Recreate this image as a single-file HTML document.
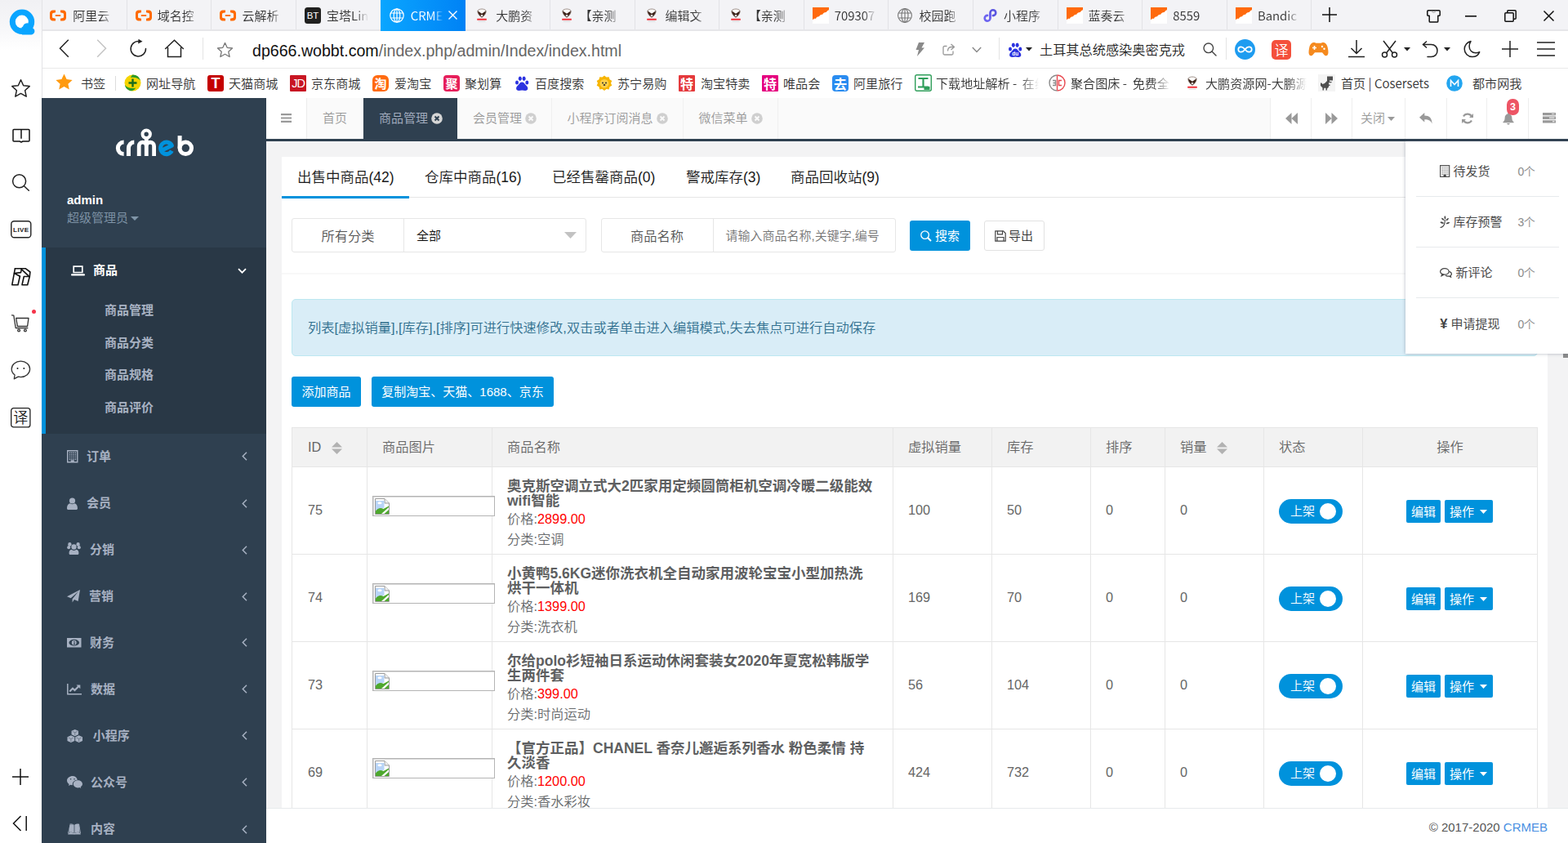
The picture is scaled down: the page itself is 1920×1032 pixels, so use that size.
<!DOCTYPE html>
<html lang="zh-CN">
<head>
<meta charset="utf-8">
<title>CRMEB管理系统</title>
<style>
*{box-sizing:border-box;margin:0;padding:0}
html,body{width:1920px;height:1032px;overflow:hidden;background:#fff}
body{position:relative;font-family:"Liberation Sans","Noto Sans CJK SC",sans-serif;color:#676a6c;font-size:16.25px;font-weight:350}
.abs{position:absolute}
svg{display:block;overflow:visible}
/* ---------- browser chrome ---------- */
#bside{position:absolute;left:0;top:0;width:52px;height:1032px;background:linear-gradient(#f1f1f4 0,#f6f6f8 30px,#fff 62px);border-right:1px solid #e3e3e6}
#bside .ic{position:absolute;left:0;width:51px}
#btabs{position:absolute;left:52px;top:0;width:1868px;height:38px;background:#f3f3f6;border-bottom:2px solid #e6e6e9;font-family:"Noto Sans CJK SC","Liberation Sans",sans-serif}
.btab{position:absolute;top:0;height:36px;width:104px;border-left:1px solid #e2e2e6;overflow:hidden;white-space:nowrap;font-size:15px;color:#333;line-height:37px}
.btab .fav{position:absolute;left:10px;top:9px;width:20px;height:20px}
.btab .tt{position:absolute;left:38px;top:0;width:50px;overflow:hidden;-webkit-mask-image:linear-gradient(90deg,#000 70%,transparent 100%);mask-image:linear-gradient(90deg,#000 70%,transparent 100%)}
.btab.on{background:linear-gradient(90deg,#0aa6ff,#0082f5);color:#fff;height:38px;border-left:none;padding-left:1px;z-index:2}
#baddr{position:absolute;left:52px;top:38px;width:1868px;height:46px;background:#fff;border-bottom:1px solid #e9e9e9;font-family:"Noto Sans CJK SC","Liberation Sans",sans-serif}
#bbook{position:absolute;left:52px;top:84px;width:1868px;height:36px;background:#fff;font-family:"Noto Sans CJK SC","Liberation Sans",sans-serif;font-size:15.1px;color:#333;white-space:nowrap}
#bbook .bk{position:absolute;top:-1px;height:36px;line-height:36px}
#bbook .bi{position:absolute;top:7.500px;width:20px;height:20px;border-radius:3px;color:#fff;font-size:13px;line-height:20px;text-align:center;font-weight:bold;overflow:hidden}
/* ---------- app ---------- */
#app{position:absolute;left:51px;top:120px;width:1869px;height:912px;background:#f3f3f4;overflow:hidden}
#nav{position:absolute;left:0;top:0;width:275px;height:912px;background:#2f4050;color:#a7b1c2}
#nav .item{position:absolute;left:0;width:274px;height:57px;font-weight:bold;font-size:16.25px;line-height:57px;color:#a7b1c2}
#nav .item .txt{position:absolute;top:0}
#nav .item .arr{position:absolute;left:243px;top:22px}
#nav .sub{position:absolute;left:76px;font-weight:bold;font-size:16.25px;color:#a7b1c2;line-height:20px}
#topbar{position:absolute;left:275px;top:0;width:1594px;height:53px;background:#fafafa;border-bottom:3px solid #2f4050}
.ttab{position:absolute;top:0;height:50px;line-height:50px;font-size:15px;color:#999;border-right:1px solid #f0f0f0;white-space:nowrap;text-align:left}
.tbtn{position:absolute;top:0;height:50px;background:#fff;border-left:1px solid #eee}
#card1{position:absolute;left:293px;top:72px;width:1550px;height:143px;background:#fff}
#card2{position:absolute;left:293px;top:216px;width:1550px;height:700px;background:#fff}
.ltab{position:absolute;top:0;height:50px;line-height:50px;font-size:17.5px;color:#1a1a1a;white-space:nowrap}
.lbox{position:absolute;border:1px solid #e6e6e6;border-radius:3px;background:#fff}
.btnp{position:absolute;font-weight:400;background:#0092dc;color:#fff;border-radius:3px;white-space:nowrap;text-align:center}
table.lt{position:absolute;border-collapse:collapse}
.cell{position:absolute;font-size:16.25px;color:#666;white-space:nowrap}
</style>
</head>
<body>
<!-- ===== browser left sidebar ===== -->
<div id="bside">
  <svg class="abs" style="left:0;top:0" width="52" height="52" viewBox="0 0 52 52">
    <circle cx="27" cy="26.800" r="15.200" fill="#0aa5ff"/>
    <path d="M27 34h11.500c2.200 0 3.900 1.800 3.900 4.100s-1.700 4.300-3.900 4.300H27z" fill="#0aa5ff"/>
    <circle cx="26.800" cy="26.600" r="8" fill="#fff"/>
    <circle cx="33.200" cy="33.400" r="5.200" fill="#0aa5ff"/>
    <circle cx="28.600" cy="35" r="2.400" fill="#0aa5ff"/>
  </svg>
  <svg class="abs" style="left:13px;top:96px" width="25" height="25" viewBox="0 0 25 25" fill="none" stroke="#222" stroke-width="1.500" stroke-linejoin="round"><path d="M12.500 1.800l3.200 7 7.500.8-5.600 5.100 1.600 7.500-6.700-3.800-6.700 3.800 1.600-7.500L1.800 9.600l7.500-.8z"/></svg>
  <svg class="abs" style="left:14.500px;top:157.300px" width="22" height="18" viewBox="0 0 22 18" fill="none" stroke="#111" stroke-width="1.500" stroke-linejoin="round"><path d="M11 1.500H2c-.6 0-1 .4-1 1V15c0 .6.400 1 1 1h7l2 1 2-1h7c.6 0 1-.4 1-1V2.500c0-.6-.4-1-1-1z"/><path d="M11 1.500v11.300"/></svg>
  <svg class="abs" style="left:14px;top:212px" width="24" height="24" viewBox="0 0 24 24" fill="none" stroke="#222" stroke-width="1.500" stroke-linecap="round"><circle cx="9.600" cy="9.800" r="8"/><path d="M15.500 15.700l5.800 5.500"/></svg>
  <svg class="abs" style="left:13px;top:270px" width="26" height="22" viewBox="0 0 26 22" fill="none" stroke="#222" stroke-width="1.400"><rect x=".8" y=".8" width="24" height="20" rx="3.500"/><text x="12.800" y="13.900" text-anchor="middle" font-family="Liberation Sans,sans-serif" font-weight="bold" font-size="8" fill="#222" stroke="none" letter-spacing=".4">LIVE</text></svg>
  <svg class="abs" style="left:13.800px;top:327.600px" width="24" height="22" viewBox="0 0 24 22" fill="none" stroke="#111" stroke-width="1.600" stroke-linejoin="round" stroke-linecap="round"><path d="M4.400.8H17.500L22.900 5l-.6 5.500"/><path d="M4.400.8L.8 20.700H8l2.400-10.400"/><path d="M15.300 10.500L13 20.700h6.700L22.300 10.500z"/><path d="M3.500 6.500l6.900 3.800"/><path d="M12.300 1.600l8.500 8"/><path d="M12.300 1.600l-.8 4-7.800.9"/></svg>
  <svg class="abs" style="left:14.300px;top:385px" width="22" height="22" viewBox="0 0 22 22" fill="none" stroke="#333" stroke-width="1.300" stroke-linejoin="round" stroke-linecap="round"><path d="M.5.800l2.300.4L5.200 16.500H19.800"/><path d="M5.700 4.500H21l-1.400 9.800H7.400z"/><circle cx="9.100" cy="19.500" r="1.400"/><circle cx="16.900" cy="19.500" r="1.400"/></svg>
  <div class="abs" style="left:38.500px;top:378.700px;width:5.400px;height:5.400px;border-radius:3px;background:#f5344a"></div>
  <svg class="abs" style="left:13px;top:441px" width="26" height="24" viewBox="0 0 26 24" fill="none" stroke="#333" stroke-width="1.300" stroke-linejoin="round"><path d="M12.400 1.200C6.200 1.200 1.200 5.500 1.200 10.800c0 2.900 1.500 5.500 3.900 7.200L4.300 22.800l5-2.600c1 .2 2 .4 3.100.4 6.200 0 11.200-4.400 11.200-9.800S18.600 1.200 12.400 1.200z"/><circle cx="8.500" cy="9.900" r="1" fill="#222" stroke="none"/><circle cx="16.300" cy="9.900" r="1" fill="#222" stroke="none"/></svg>
  <svg class="abs" style="left:13.300px;top:499.300px" width="25" height="25" viewBox="0 0 25 25" fill="none" stroke="#222" stroke-width="1.300"><rect x=".7" y=".7" width="23.200" height="23.200" rx="3"/><text x="12.300" y="19" text-anchor="middle" font-family="Noto Sans CJK SC,sans-serif" font-size="18" fill="#222" stroke="none">译</text></svg>
  <svg class="abs" style="left:15px;top:941px" width="20" height="20" viewBox="0 0 20 20" fill="none" stroke="#111" stroke-width="1.500"><path d="M10 0v20M0 10h20"/></svg>
  <svg class="abs" style="left:15px;top:998px" width="20" height="20" viewBox="0 0 20 20" fill="none" stroke="#111" stroke-width="1.500"><path d="M10.500 1L1.500 10l9 9M17.200 1v18"/></svg>
</div>
<!-- ===== browser tabs ===== -->
<div id="btabs">
<div class="btab" style="left:-0.8px;width:103.62px;border-left:none;padding-left:1px"><svg class="fav" viewBox="0 0 20 20"><path d="M7 3.500H3.800C1.700 3.500 0 5.200 0 7.300v5.400c0 2.100 1.700 3.800 3.800 3.800H7v-2.700l-3-.7c-.6-.1-1-.7-1-1.300V8.200c0-.6.400-1.200 1-1.300l3-.7zM13 3.500h3.200c2.100 0 3.800 1.700 3.800 3.800v5.400c0 2.100-1.700 3.800-3.800 3.800H13v-2.700l3-.7c.6-.1 1-.7 1-1.300V8.200c0-.6-.4-1.200-1-1.300l-3-.7z" fill="#ff6a00"/><rect x="6.800" y="9.100" width="6.400" height="1.800" fill="#ff6a00"/></svg><span class="tt" style="left:38px;width:50px">阿里云</span></div>
<div class="btab" style="left:102.8px;width:103.62px"><svg class="fav" viewBox="0 0 20 20"><path d="M7 3.500H3.800C1.700 3.500 0 5.200 0 7.300v5.400c0 2.100 1.700 3.800 3.800 3.800H7v-2.700l-3-.7c-.6-.1-1-.7-1-1.300V8.200c0-.6.400-1.200 1-1.300l3-.7zM13 3.500h3.200c2.100 0 3.800 1.700 3.800 3.800v5.400c0 2.100-1.700 3.800-3.800 3.800H13v-2.700l3-.7c.6-.1 1-.7 1-1.300V8.200c0-.6-.4-1.200-1-1.300l-3-.7z" fill="#ff6a00"/><rect x="6.800" y="9.100" width="6.400" height="1.800" fill="#ff6a00"/></svg><span class="tt" style="left:37px;width:51px">域名控</span></div>
<div class="btab" style="left:206.4px;width:103.62px"><svg class="fav" viewBox="0 0 20 20"><path d="M7 3.500H3.800C1.700 3.500 0 5.200 0 7.300v5.400c0 2.100 1.700 3.800 3.800 3.800H7v-2.700l-3-.7c-.6-.1-1-.7-1-1.300V8.200c0-.6.400-1.200 1-1.300l3-.7zM13 3.500h3.200c2.100 0 3.800 1.700 3.800 3.800v5.400c0 2.100-1.700 3.800-3.800 3.800H13v-2.700l3-.7c.6-.1 1-.7 1-1.300V8.200c0-.6-.4-1.200-1-1.300l-3-.7z" fill="#ff6a00"/><rect x="6.800" y="9.100" width="6.400" height="1.800" fill="#ff6a00"/></svg><span class="tt" style="left:37px;width:51px">云解析</span></div>
<div class="btab" style="left:310.1px;width:103.62px"><svg class="fav" viewBox="0 0 20 20"><rect x="0" y="0" width="20" height="20" rx="3.500" fill="#20201f"/><text x="10" y="14.300" text-anchor="middle" font-family="Liberation Sans,sans-serif" font-size="11.500" fill="#fff">BT</text></svg><span class="tt" style="left:37px;width:51px">宝塔Lin</span></div>
<div class="btab on" style="left:413.7px;width:103.92px"><svg class="fav" viewBox="0 0 20 20" fill="none" stroke="#fff" stroke-width="1.200"><circle cx="10" cy="10" r="8.200"/><ellipse cx="10" cy="10" rx="3.800" ry="8.200"/><path d="M2.500 7h15M2.500 13h15M10 1.800v16.400"/></svg><span class="tt" style="left:37px;width:40px">CRME</span><svg class="abs" style="left:83px;top:13px" width="11" height="11" viewBox="0 0 11 11" stroke="#fff" stroke-width="1.400" fill="none"><path d="M.5.500l10 10M10.500.500l-10 10"/></svg></div>
<div class="btab" style="left:517.3px;width:103.62px"><svg class="fav" viewBox="0 0 20 20"><path d="M4.800 4C6.200 2.700 8 2 10 2s3.800.7 5.200 2c.2 3-1.500 6-5.200 8.300C6.300 10 4.600 7 4.800 4z" fill="#fbf9f7" stroke="#8a7a72" stroke-width=".8"/><path d="M4.900 4.300L10 7.800l5.100-3.500c-.3 3.500-2.100 6.100-5.100 8-3-1.900-4.800-4.500-5.100-8z" fill="#3b2219"/><path d="M10 8.800l1.700 1.300L10 11.400 8.300 10.100z" fill="#fff"/><rect x="4.200" y="13.700" width="11.600" height="2.100" rx=".4" fill="#f2303a"/><rect x="5.500" y="16.800" width="9" height=".7" fill="#cfcfcf"/></svg><span class="tt" style="left:37px;width:51px">大鹏资</span></div>
<div class="btab" style="left:620.9px;width:103.62px"><svg class="fav" viewBox="0 0 20 20"><path d="M4.800 4C6.200 2.700 8 2 10 2s3.800.7 5.200 2c.2 3-1.500 6-5.200 8.300C6.300 10 4.600 7 4.800 4z" fill="#fbf9f7" stroke="#8a7a72" stroke-width=".8"/><path d="M4.900 4.300L10 7.800l5.100-3.500c-.3 3.500-2.100 6.100-5.100 8-3-1.900-4.800-4.500-5.100-8z" fill="#3b2219"/><path d="M10 8.800l1.700 1.300L10 11.400 8.300 10.100z" fill="#fff"/><rect x="4.200" y="13.700" width="11.600" height="2.100" rx=".4" fill="#f2303a"/><rect x="5.500" y="16.800" width="9" height=".7" fill="#cfcfcf"/></svg><span class="tt" style="left:35.5px;width:52.5px">【亲测</span></div>
<div class="btab" style="left:724.5px;width:103.62px"><svg class="fav" viewBox="0 0 20 20"><path d="M4.800 4C6.200 2.700 8 2 10 2s3.800.7 5.200 2c.2 3-1.500 6-5.200 8.300C6.300 10 4.600 7 4.800 4z" fill="#fbf9f7" stroke="#8a7a72" stroke-width=".8"/><path d="M4.900 4.300L10 7.800l5.100-3.500c-.3 3.500-2.100 6.100-5.100 8-3-1.900-4.800-4.500-5.100-8z" fill="#3b2219"/><path d="M10 8.800l1.700 1.300L10 11.400 8.300 10.100z" fill="#fff"/><rect x="4.200" y="13.700" width="11.600" height="2.100" rx=".4" fill="#f2303a"/><rect x="5.500" y="16.800" width="9" height=".7" fill="#cfcfcf"/></svg><span class="tt" style="left:37px;width:51px">编辑文</span></div>
<div class="btab" style="left:828.2px;width:103.62px"><svg class="fav" viewBox="0 0 20 20"><path d="M4.800 4C6.200 2.700 8 2 10 2s3.800.7 5.200 2c.2 3-1.500 6-5.200 8.300C6.300 10 4.600 7 4.800 4z" fill="#fbf9f7" stroke="#8a7a72" stroke-width=".8"/><path d="M4.900 4.300L10 7.800l5.100-3.500c-.3 3.500-2.100 6.100-5.100 8-3-1.900-4.800-4.500-5.100-8z" fill="#3b2219"/><path d="M10 8.800l1.700 1.300L10 11.400 8.300 10.100z" fill="#fff"/><rect x="4.200" y="13.700" width="11.600" height="2.100" rx=".4" fill="#f2303a"/><rect x="5.500" y="16.800" width="9" height=".7" fill="#cfcfcf"/></svg><span class="tt" style="left:35.5px;width:52.5px">【亲测</span></div>
<div class="btab" style="left:931.8px;width:103.62px"><svg class="fav" viewBox="0 0 20 20"><rect width="20" height="20" fill="#ff6a0d"/><path d="M0 15.500c1-1.500 2.500-2 4-1.500.5-2 2-3 4-2.800.8-1.800 2.500-2.800 4.200-2.400 1-2 2.500-3 4.500-2.800.8-1.500 2-2.500 3.300-2.800V20H0z" fill="#fff"/></svg><span class="tt" style="left:37px;width:51px">709307</span></div>
<div class="btab" style="left:1035.4px;width:103.62px"><svg class="fav" viewBox="0 0 20 20" fill="none" stroke="#777" stroke-width="1.100"><circle cx="10" cy="10" r="8.400"/><ellipse cx="10" cy="10" rx="4" ry="8.400"/><path d="M2.500 7h15M2.500 13h15M10 1.600v16.800"/></svg><span class="tt" style="left:37px;width:51px">校园跑</span></div>
<div class="btab" style="left:1139.0px;width:103.62px"><svg class="fav" viewBox="0 0 20 20" fill="none" stroke="#5a55e0" stroke-width="2.600" stroke-linecap="round"><path d="M10.500 12.500V6.800c0-2 1.500-3.500 3.400-3.500s3.400 1.500 3.400 3.400-1.500 3.400-3.400 3.400"/><path d="M10.500 8v5.200c0 2-1.500 3.500-3.400 3.500s-3.400-1.500-3.400-3.400 1.500-3.400 3.400-3.400" stroke="#6c63f0"/></svg><span class="tt" style="left:37px;width:51px">小程序</span></div>
<div class="btab" style="left:1242.6px;width:103.62px"><svg class="fav" viewBox="0 0 20 20"><rect width="20" height="20" fill="#ff6a0d"/><path d="M0 15.500c1-1.500 2.500-2 4-1.500.5-2 2-3 4-2.800.8-1.800 2.500-2.800 4.200-2.400 1-2 2.500-3 4.500-2.800.8-1.500 2-2.500 3.300-2.800V20H0z" fill="#fff"/></svg><span class="tt" style="left:37px;width:51px">蓝奏云</span></div>
<div class="btab" style="left:1346.3px;width:103.62px"><svg class="fav" viewBox="0 0 20 20"><rect width="20" height="20" fill="#ff6a0d"/><path d="M0 15.500c1-1.500 2.500-2 4-1.500.5-2 2-3 4-2.800.8-1.800 2.500-2.800 4.200-2.400 1-2 2.500-3 4.500-2.800.8-1.500 2-2.500 3.300-2.800V20H0z" fill="#fff"/></svg><span class="tt" style="left:37px;width:51px">8559</span></div>
<div class="btab" style="left:1449.9px;width:103.62px"><svg class="fav" viewBox="0 0 20 20"><rect width="20" height="20" fill="#ff6a0d"/><path d="M0 15.500c1-1.500 2.500-2 4-1.500.5-2 2-3 4-2.800.8-1.800 2.500-2.800 4.200-2.400 1-2 2.500-3 4.500-2.800.8-1.500 2-2.500 3.300-2.800V20H0z" fill="#fff"/></svg><span class="tt" style="left:37px;width:51px">Bandic</span></div>
<div class="abs" style="left:1552.5px;top:0;width:1px;height:36px;background:#e2e2e6"></div>
<svg class="abs" style="left:1567px;top:9px" width="18" height="18" viewBox="0 0 18 18" stroke="#111" stroke-width="1.500" fill="none"><path d="M9 0v18M0 9h18"/></svg>
<svg class="abs" style="left:1694.500px;top:11.500px" width="17" height="16" viewBox="0 0 17 16" stroke="#111" stroke-width="1.500" fill="none" stroke-linejoin="round"><path d="M2 .8h13c.7 0 1.200.5 1.200 1.200V6.500c0 .4-.3.700-.7.700H13.800V14c0 .6-.5 1.100-1.100 1.100H4.300c-.6 0-1.100-.5-1.100-1.100V7.200H1.500c-.4 0-.7-.3-.7-.7V2c0-.7.500-1.200 1.200-1.200z"/><path d="M6 1c.3 1.500 1.200 2.300 2.500 2.300S10.700 2.500 11 1" stroke="#999" stroke-width="1.100"/></svg>
<svg class="abs" style="left:1742px;top:19px" width="14" height="2" viewBox="0 0 14 2"><rect width="14" height="1.600" fill="#111"/></svg>
<svg class="abs" style="left:1790px;top:12px" width="15" height="15" viewBox="0 0 15 15" stroke="#111" stroke-width="1.500" fill="none"><rect x=".8" y="3.800" width="10.400" height="10.400" rx="1"/><path d="M3.800 3.800V1.800c0-.6.400-1 1-1h8.400c.6 0 1 .4 1 1v8.400c0 .6-.4 1-1 1h-2"/></svg>
<svg class="abs" style="left:1838px;top:13px" width="13" height="13" viewBox="0 0 13 13" stroke="#111" stroke-width="1.500" fill="none"><path d="M.5.500l12 12M12.500.500l-12 12"/></svg>
</div>
<!-- ===== address bar ===== -->
<div id="baddr">
<svg class="abs" style="left:20px;top:10px" width="13" height="23" viewBox="0 0 13 23" fill="none" stroke="#222" stroke-width="1.500"><path d="M11.800 .8L1.500 11.300l10.300 10.500"/></svg>
<svg class="abs" style="left:66px;top:10px" width="13" height="23" viewBox="0 0 13 23" fill="none" stroke="#c4c4c4" stroke-width="1.500"><path d="M1.200 .8l10.300 10.500L1.200 21.800"/></svg>
<svg class="abs" style="left:106px;top:9px" width="23" height="24" viewBox="0 0 23 24" fill="none" stroke="#222" stroke-width="1.500"><path d="M13.500 3.800A9.200 9.200 0 1 0 20.500 12.500" stroke-linecap="round"/><path d="M11.500.8l5 3-5.300 2.600z" fill="#222" stroke="none"/></svg>
<svg class="abs" style="left:149px;top:10px" width="25" height="23" viewBox="0 0 25 23" fill="none" stroke="#222" stroke-width="1.500" stroke-linejoin="miter"><path d="M1.200 12L12.500 1.200 23.800 12"/><path d="M4.500 10v11.500h16V10"/></svg>
<div class="abs" style="left:196px;top:8px;width:1px;height:27px;background:#e4e4e4"></div>
<svg class="abs" style="left:213px;top:13px" width="21" height="20" viewBox="0 0 21 20" fill="none" stroke="#777" stroke-width="1.300" stroke-linejoin="round"><path d="M10.500 1.500l2.700 5.800 6.300.7-4.700 4.300 1.300 6.200-5.600-3.200-5.600 3.200 1.300-6.200L1.500 8l6.300-.7z"/></svg>
<div class="abs" style="left:257px;top:0;height:46px;line-height:46px;font-size:19.6px;white-space:nowrap;color:#111;font-family:Liberation Sans,sans-serif;padding-top:1px"><span>dp666.wobbt.com</span><span style="color:#666">/index.php/admin/Index/index.html</span></div>
<svg class="abs" style="left:1069px;top:14px" width="12" height="17" viewBox="0 0 12 17" fill="none" stroke="#222" stroke-width="1.500"><path d="M4 0h7L7.500 6.500H11L2 17l2-8H.5z" fill="#8a8a8a" stroke="none"/></svg>
<svg class="abs" style="left:1102px;top:15px" width="16" height="15" viewBox="0 0 16 15" fill="none" stroke="#999" stroke-width="1.300" stroke-linejoin="round"><path d="M5.500 3.500h-3c-.8 0-1.500.7-1.500 1.500v7.500c0 .8.700 1.500 1.500 1.500h9c.8 0 1.500-.7 1.500-1.500V9.500"/><path d="M10.500 1l4 3.500-4 3.500M14.500 4.500h-3c-3 0-5 2-5 5"/></svg>
<svg class="abs" style="left:1138px;top:19px" width="12" height="8" viewBox="0 0 12 8" fill="none" stroke="#888" stroke-width="1.400"><path d="M.8 1l5.200 5.500L11.200 1"/></svg>
<div class="abs" style="left:1171px;top:8px;width:1px;height:27px;background:#e4e4e4"></div>
<svg class="abs" style="left:1182px;top:14px" width="18" height="18" viewBox="0 0 18 18" fill="#2b32e0" stroke="none"><ellipse cx="3" cy="8" rx="2" ry="2.600"/><ellipse cx="6.800" cy="3.300" rx="2" ry="2.700"/><ellipse cx="11.600" cy="3.300" rx="2" ry="2.700"/><ellipse cx="15.300" cy="8" rx="2" ry="2.600"/><path d="M9.200 7.500c2 0 3 1.800 4.500 3.500 1.500 1.600 2.600 2.400 2.600 4.200 0 1.700-1.400 2.800-3.200 2.800-1.300 0-2.500-.4-3.900-.4s-2.600.4-3.900.4c-1.800 0-3.200-1.100-3.200-2.800 0-1.800 1.100-2.600 2.600-4.200 1.500-1.700 2.500-3.500 4.500-3.500z"/><text x="9.200" y="16" text-anchor="middle" font-family="Liberation Sans,sans-serif" font-size="6.500" font-weight="bold" fill="#fff">du</text></svg>
<svg class="abs" style="left:1204px;top:20px" width="8" height="5" viewBox="0 0 8 5" fill="#222" stroke="none"><path d="M0 0h8L4 4.500z"/></svg>
<div class="abs" style="left:1221px;top:0;height:46px;line-height:45px;font-size:16.2px;white-space:nowrap;color:#222">土耳其总统感染奥密克戎</div>
<svg class="abs" style="left:1421px;top:14px" width="17" height="17" viewBox="0 0 17 17" fill="none" stroke="#444" stroke-width="1.400" stroke-linecap="round"><circle cx="6.800" cy="6.800" r="5.800"/><path d="M11 11l5 5"/></svg>
<div class="abs" style="left:1449px;top:8px;width:1px;height:27px;background:#e4e4e4"></div>
<svg class="abs" style="left:1460px;top:10px" width="25" height="25" viewBox="0 0 25 25" fill="none" stroke="#222" stroke-width="1.500"><circle cx="12.500" cy="12.500" r="12.500" fill="#1e9cf0" stroke="none"/><path d="M12.500 12.500c-1.500-2-3-3.200-4.700-3.200-2 0-3.500 1.400-3.500 3.200s1.500 3.200 3.500 3.200c1.700 0 3.200-1.200 4.700-3.200zm0 0c1.500 2 3 3.200 4.700 3.200 2 0 3.500-1.400 3.500-3.200s-1.500-3.200-3.500-3.200c-1.700 0-3.200 1.200-4.700 3.200z" stroke="#fff" stroke-width="1.800" fill="none"/></svg>
<div class="abs" style="left:1505px;top:11px;width:24px;height:24px;border-radius:5px;background:#f4503c;color:#fff;font-size:17px;line-height:24px;text-align:center">译</div>
<svg class="abs" style="left:1550px;top:12px" width="25" height="20" viewBox="0 0 25 20" fill="none" stroke="#222" stroke-width="1.500"><path d="M7 2c-3 0-5 2.500-5.800 6.500C.3 13 .2 16 1.500 17.500c1.200 1.300 3 .8 4.200-.6l2.300-2.700h9l2.300 2.700c1.200 1.400 3 1.900 4.200.6 1.300-1.500 1.200-4.500.3-9C23 4.500 21 2 18 2c-1.500 0-2.200.8-3.500.8h-4C9.200 2.800 8.500 2 7 2z" fill="#f58a1f" stroke="none"/><path d="M7.500 6v5M5 8.500h5" stroke="#fff" stroke-width="1.600"/><circle cx="17" cy="7" r="1.200" fill="#fff" stroke="none"/><circle cx="19.500" cy="9.800" r="1.200" fill="#fff" stroke="none"/></svg>
<svg class="abs" style="left:1598px;top:11px" width="22" height="22" viewBox="0 0 22 22" fill="none" stroke="#222" stroke-width="1.500"><path d="M11 0v16M4.500 10l6.500 6.500L17.500 10M1 20.500h20"/></svg>
<svg class="abs" style="left:1639px;top:11px" width="21" height="22" viewBox="0 0 21 22" fill="none" stroke="#222" stroke-width="1.500"><path d="M3 1l11.500 15M18 1L6.500 16"/><circle cx="4.500" cy="18" r="3"/><circle cx="16.500" cy="18" r="3"/></svg>
<svg class="abs" style="left:1667px;top:20px" width="8" height="5" viewBox="0 0 8 5" fill="#222" stroke="none"><path d="M0 0h8L4 4.500z"/></svg>
<svg class="abs" style="left:1688px;top:12px" width="22" height="21" viewBox="0 0 22 21" fill="none" stroke="#222" stroke-width="1.500"><path d="M3 4.500h9.500c4.500 0 7.500 3.200 7.500 7.500s-3 7.500-7.500 7.500H8" stroke-linecap="round"/><path d="M7 .5L2.500 4.500 7 8.500"/></svg>
<svg class="abs" style="left:1716px;top:20px" width="8" height="5" viewBox="0 0 8 5" fill="#222" stroke="none"><path d="M0 0h8L4 4.500z"/></svg>
<svg class="abs" style="left:1740px;top:11px" width="21" height="22" viewBox="0 0 21 22" fill="none" stroke="#222" stroke-width="1.500" stroke-linejoin="round"><path d="M9 1.500C4.500 2.500 1.200 6.400 1.200 11c0 5.300 4.300 9.600 9.600 9.600 4 0 7.500-2.500 8.900-6-1.400.8-3 1.200-4.600 1.200-4.800 0-8-3.500-8-8 0-2.300.7-4.500 1.900-6.300z"/></svg>
<svg class="abs" style="left:1787px;top:12px" width="20" height="20" viewBox="0 0 20 20" fill="none" stroke="#222" stroke-width="1.500"><path d="M10 0v20M0 10h20"/></svg>
<svg class="abs" style="left:1830px;top:13px" width="22" height="18" viewBox="0 0 22 18" fill="none" stroke="#222" stroke-width="1.500"><path d="M0 1h22M0 9h22M0 17h22"/></svg>
</div>
<!-- ===== bookmarks bar ===== -->
<div id="bbook">
<svg class="abs" style="left:16px;top:6.200px" width="21" height="20" viewBox="0 0 21 20"><path d="M10.500 .5l3.100 6.500 7 .9-5.200 4.800 1.400 6.900-6.300-3.500-6.300 3.500 1.400-6.900L.4 7.900l7-.9z" fill="#ff9a10"/></svg><span class="bk" style="left:47px">书签</span>
<div class="abs" style="left:89px;top:9px;width:1px;height:18px;background:#ddd"></div>
<svg class="abs" style="left:100px;top:7px" width="21" height="21" viewBox="0 0 21 21"><circle cx="10.500" cy="10.500" r="10" fill="#f5d400"/><path d="M10.500.5a10 10 0 0 1 9.500 7c-3-3-7-4.500-12-3.500C8.500 2.500 9.500 1 10.500.5z" fill="#2a9a2a"/><path d="M.8 13c3 3.500 8 5 13.500 3.500-1.500 2.500-4 4-6.500 3.700C4.500 19.500 1.500 16.500.8 13z" fill="#2a9a2a"/><path d="M10.500 5.500v10M5.500 10.500h10" stroke="#1c6b1c" stroke-width="2.400"/></svg><span class="bk" style="left:127px">网址导航</span>
<span class="bi" style="left:202px;background:#c40000;font-size:18px;font-family:Liberation Sans,sans-serif">T</span><span class="bk" style="left:228px">天猫商城</span>
<span class="bi" style="left:303px;background:#c81623;font-size:14.5px;font-family:Liberation Sans,sans-serif;font-weight:normal;letter-spacing:-1px;border-radius:1px">JD</span><span class="bk" style="left:329px">京东商城</span>
<span class="bi" style="left:404px;background:#ff6a10;font-size:15px;border-radius:6px 6px 6px 2px">淘</span><span class="bk" style="left:431px">爱淘宝</span>
<span class="bi" style="left:491px;background:#e61e5a;font-size:15px;border-radius:4px">聚</span><span class="bk" style="left:517px">聚划算</span>
<svg class="abs" style="left:578px;top:9px" width="18" height="18" viewBox="0 0 18 18" fill="#2b32e0"><ellipse cx="3" cy="8" rx="2" ry="2.600"/><ellipse cx="6.800" cy="3.300" rx="2" ry="2.700"/><ellipse cx="11.600" cy="3.300" rx="2" ry="2.700"/><ellipse cx="15.300" cy="8" rx="2" ry="2.600"/><path d="M9.200 7.500c2 0 3 1.800 4.500 3.500 1.500 1.600 2.600 2.400 2.600 4.200 0 1.700-1.400 2.800-3.200 2.800-1.300 0-2.500-.4-3.900-.4s-2.600.4-3.900.4c-1.800 0-3.200-1.100-3.200-2.800 0-1.800 1.100-2.600 2.600-4.200 1.500-1.700 2.500-3.500 4.500-3.500z"/></svg><span class="bk" style="left:603px">百度搜索</span>
<svg class="abs" style="left:678px;top:8px" width="20" height="20" viewBox="0 0 20 20"><path d="M10 .5l2.500 2 3.200-.3.800 3.100 2.800 1.600-1.300 2.900 1.300 2.900-2.800 1.600-.8 3.100-3.200-.3-2.500 2-2.500-2-3.200.3-.8-3.100L.7 12.700 2 9.800.7 6.900l2.800-1.600.8-3.100 3.200.3z" fill="#f7b500"/><circle cx="10" cy="10.300" r="5.400" fill="#ffd04a"/><circle cx="8" cy="9.500" r="1" fill="#333"/><circle cx="12" cy="9.500" r="1" fill="#333"/><ellipse cx="10" cy="12" rx="1.300" ry="1" fill="#333"/></svg><span class="bk" style="left:704px">苏宁易购</span>
<span class="bi" style="left:779px;background:#e4393c;font-size:16px;border-radius:1px">特</span><span class="bk" style="left:806px">淘宝特卖</span>
<span class="bi" style="left:881px;background:#e5007f;font-size:16px;border-radius:1px">特</span><span class="bk" style="left:907px">唯品会</span>
<span class="bi" style="left:967px;background:#2a8cf0;font-size:16px;border-radius:4px">去</span><span class="bk" style="left:993px">阿里旅行</span>
<svg class="abs" style="left:1068px;top:7px" width="21" height="21" viewBox="0 0 21 21"><rect x=".7" y=".7" width="19.600" height="19.600" rx="2" fill="#fff" stroke="#2f9e5a" stroke-width="1.400"/><path d="M4.500 5h12M10.500 5v10M4 15.500h13" stroke="#2f9e5a" stroke-width="2.200" fill="none"/><rect x="11.500" y="15" width="7" height="4" fill="#2f9e5a"/></svg><span class="bk" style="left:1094px;width:126px;overflow:hidden;-webkit-mask-image:linear-gradient(90deg,#000 82%,transparent 100%);mask-image:linear-gradient(90deg,#000 82%,transparent 100%)">下载地址解析&nbsp;-&nbsp; 在线</span>
<svg class="abs" style="left:1232px;top:7px" width="21" height="21" viewBox="0 0 21 21" fill="none" stroke-width="1.400"><path d="M10.500 1A9.500 9.500 0 0 0 10.500 20" stroke="#8a8a8a"/><path d="M10.500 1A9.500 9.500 0 0 1 10.500 20" stroke="#e8484f"/><path d="M10.500 1.500v18" stroke="#e8484f"/><path d="M5 7.500h3.500v6H5M8.500 10.500H5.500" stroke="#8a8a8a"/><path d="M16 7.500h-3.500v6H16" stroke="#e8484f"/></svg><span class="bk" style="left:1259px;width:122px;overflow:hidden;-webkit-mask-image:linear-gradient(90deg,#000 82%,transparent 100%);mask-image:linear-gradient(90deg,#000 82%,transparent 100%)">聚合图床&nbsp;-&nbsp; 免费全</span>
<svg class="abs" style="left:1398px;top:8px" width="20" height="20" viewBox="0 0 20 20"><path d="M4.800 4C6.200 2.700 8 2 10 2s3.800.7 5.200 2c.2 3-1.500 6-5.200 8.300C6.300 10 4.600 7 4.800 4z" fill="#fbf9f7" stroke="#8a7a72" stroke-width=".8"/><path d="M4.900 4.300L10 7.800l5.100-3.500c-.3 3.500-2.100 6.100-5.100 8-3-1.900-4.800-4.500-5.100-8z" fill="#3b2219"/><path d="M10 8.800l1.700 1.300L10 11.400 8.300 10.100z" fill="#fff"/><rect x="4.200" y="13.700" width="11.600" height="2.100" rx=".4" fill="#f2303a"/><rect x="5.500" y="16.800" width="9" height=".7" fill="#cfcfcf"/></svg><span class="bk" style="left:1424px;width:124px;overflow:hidden;-webkit-mask-image:linear-gradient(90deg,#000 82%,transparent 100%);mask-image:linear-gradient(90deg,#000 82%,transparent 100%)">大鹏资源网-大鹏源</span>
<svg class="abs" style="left:1562px;top:7px" width="21" height="21" viewBox="0 0 21 21"><rect width="21" height="21" fill="#f4f4f4"/><path d="M11 2.500h7v5h-4v1.500h2.500v1.200h-3.500v2.300h1.500v1.500h-1.500v1.500l-2 2v2h-1.500v-2.500l-1.500-.5-1 1v2H5.500v-3L3 14v-3.500h1.200l1.300 1.500 2.500-1 3-3z" fill="#505050"/></svg><span class="bk" style="left:1590px">首页 | Cosersets</span>
<svg class="abs" style="left:1719px;top:8px" width="20" height="20" viewBox="0 0 20 20"><circle cx="10" cy="10" r="9.800" fill="#22a5f0"/><path d="M5.500 14V6.500l4.500 5 4.500-5V14" fill="none" stroke="#fff" stroke-width="1.600"/></svg><span class="bk" style="left:1751px">都市网我</span>
</div>
<!-- ===== app ===== -->
<div id="app">
<div id="nav">
<div class="abs" style="left:0;top:183px;width:275px;height:228px;background:#293846;border-left:5px solid #0092dc"></div>
<div class="abs" style="left:1px;top:0;width:274px;height:912px">
<svg class="abs" style="left:88px;top:40px" width="100" height="35" viewBox="0 0 100 35" fill="none" stroke="#fff" stroke-width="5">
<path d="M11.600 14.100A7.250 7.250 0 0 0 11.600 28.600"/>
<path d="M17.450 31.100V21.350A6.900 7.250 0 0 1 24.300 14.100"/>
<path d="M30.200 31.100V18.700A4.550 4.600 0 0 1 39.300 18.700V31.100M39.300 18.700A4.650 4.600 0 0 1 48.600 18.700V31.100" stroke-width="4.800"/>
<path d="M39.300 10V18" stroke-width="4.800"/>
<circle cx="39.200" cy="4.200" r="4.700" stroke-width="4"/>
<g transform="rotate(-26 63.850 21.350)"><path d="M57 21.350H71.100A7.250 7.250 0 1 0 68.200 27.150" stroke="#0092dc" stroke-linejoin="round"/></g>
<path d="M80.100 6.100V21.350"/>
<circle cx="87.300" cy="21.350" r="7.250"/>
</svg>
<div class="abs" style="left:30px;top:116px;font-size:15px;font-weight:bold;color:#fff;line-height:18px">admin</div>
<div class="abs" style="left:30px;top:137px;font-size:15px;color:#8095a8;line-height:20px;white-space:nowrap">超级管理员<svg style="display:inline-block;margin-left:3px;vertical-align:2px" width="10" height="5" viewBox="0 0 10 5"><path d="M0 0h10L5 5z" fill="#8095a8"/></svg></div>
<svg class="abs" style="left:35px;top:205px" width="17" height="13" viewBox="0 0 17 13"><path d="M3.200 1.200h10.600v7.300H3.200z" fill="none" stroke="#fff" stroke-width="1.700"/><rect x="0" y="10.300" width="17" height="2.200" rx="1" fill="#fff"/></svg>
<div class="abs" style="left:62px;top:201px;font-size:15px;font-weight:bold;color:#fff;line-height:20px">商品</div>
<svg class="abs" style="left:239px;top:208px" width="11" height="8" viewBox="0 0 11 8" fill="none" stroke="#fff" stroke-width="1.800"><path d="M1 1.200l4.500 4.500L10 1.200"/></svg>
<div class="sub" style="top:249.8px;font-size:15px">商品管理</div>
<div class="sub" style="top:289.6px;font-size:15px">商品分类</div>
<div class="sub" style="top:328.8px;font-size:15px">商品规格</div>
<div class="sub" style="top:368.8px;font-size:15px">商品评价</div>
<svg class="abs" style="left:30px;top:431.0px" width="13.500" height="15.500" viewBox="0 0 13.500 15.500"><path d="M.7.700h12.100v14.100H.7z" fill="none" stroke="#a7b1c2" stroke-width="1.400"/><path d="M2.9 2.6h1.300v1.300h-1.300zM2.9 4.7h1.300v1.300h-1.300zM2.9 6.8h1.300v1.300h-1.300zM2.9 8.9h1.300v1.300h-1.300zM2.9 11.0h1.300v1.300h-1.300zM5.2 2.6h1.300v1.300h-1.300zM5.2 4.7h1.300v1.300h-1.300zM5.2 6.8h1.300v1.300h-1.300zM5.2 8.9h1.300v1.300h-1.300zM5.2 11.0h1.300v1.300h-1.300zM7.5 2.6h1.300v1.300h-1.300zM7.5 4.7h1.300v1.300h-1.300zM7.5 6.8h1.300v1.300h-1.300zM7.5 8.9h1.300v1.300h-1.300zM7.5 11.0h1.300v1.300h-1.300zM9.8 2.6h1.300v1.300h-1.300zM9.8 4.7h1.300v1.300h-1.300zM9.8 6.8h1.300v1.300h-1.300zM9.8 8.9h1.300v1.300h-1.300zM9.8 11.0h1.300v1.300h-1.300z" fill="#a7b1c2"/><path d="M4.700 12.300h4.100v2.500H4.700z" fill="#a7b1c2"/></svg>
<div class="abs" style="left:54.0px;top:428.7px;font-size:15px;font-weight:bold;color:#a7b1c2;line-height:20px;white-space:nowrap">订单</div>
<svg class="abs" style="left:244px;top:433.2px" width="7" height="11" viewBox="0 0 7 11" fill="none" stroke="#a7b1c2" stroke-width="1.500"><path d="M6 .8L1.300 5.500 6 10.200"/></svg>
<svg class="abs" style="left:30px;top:488.5px" width="13" height="15" viewBox="0 0 13 15" fill="#a7b1c2"><circle cx="6.500" cy="4" r="3.600"/><path d="M0 13.500c0-3.500 1.500-6 4-6.200.7.600 1.500.9 2.500.9s1.800-.3 2.500-.9c2.500.2 4 2.700 4 6.200 0 .8-.7 1.500-1.700 1.500H1.700C.7 15 0 14.300 0 13.500z"/></svg>
<div class="abs" style="left:54.0px;top:486.0px;font-size:15px;font-weight:bold;color:#a7b1c2;line-height:20px;white-space:nowrap">会员</div>
<svg class="abs" style="left:244px;top:490.5px" width="7" height="11" viewBox="0 0 7 11" fill="none" stroke="#a7b1c2" stroke-width="1.500"><path d="M6 .8L1.300 5.500 6 10.200"/></svg>
<svg class="abs" style="left:30px;top:545.5px;margin-top:-1.500px" width="17" height="15" viewBox="0 0 18 15" preserveAspectRatio="none" fill="#a7b1c2"><circle cx="9" cy="5.500" r="3.300"/><circle cx="3.600" cy="2.400" r="2.300"/><circle cx="14.400" cy="2.400" r="2.300"/><circle cx="2.300" cy="6.200" r="2.100"/><circle cx="15.700" cy="6.200" r="2.100"/><path d="M2.700 13.500c0-2.700 1-4.500 3-4.700.9.700 2 1.100 3.300 1.100s2.400-.4 3.300-1.100c2 .2 3 2 3 4.700 0 .9-.6 1.500-1.600 1.500H4.300c-1 0-1.600-.6-1.600-1.500z"/></svg>
<div class="abs" style="left:58.0px;top:543.0px;font-size:15px;font-weight:bold;color:#a7b1c2;line-height:20px;white-space:nowrap">分销</div>
<svg class="abs" style="left:244px;top:547.5px" width="7" height="11" viewBox="0 0 7 11" fill="none" stroke="#a7b1c2" stroke-width="1.500"><path d="M6 .8L1.300 5.500 6 10.200"/></svg>
<svg class="abs" style="left:30px;top:602.2px" width="16" height="15.500" viewBox="0 0 17 16" preserveAspectRatio="none" fill="#a7b1c2"><path d="M17 0L14.500 14.500l-5-2L7 16v-4.500L15 2 5 10.500 0 8.500z"/></svg>
<div class="abs" style="left:57.0px;top:600.0px;font-size:15px;font-weight:bold;color:#a7b1c2;line-height:20px;white-space:nowrap">营销</div>
<svg class="abs" style="left:244px;top:604.5px" width="7" height="11" viewBox="0 0 7 11" fill="none" stroke="#a7b1c2" stroke-width="1.500"><path d="M6 .8L1.300 5.500 6 10.200"/></svg>
<svg class="abs" style="left:30px;top:661.1px" width="17.500" height="11.500" viewBox="0 0 17.500 11.500"><rect x="0" y="0" width="17.500" height="11.500" fill="#a7b1c2"/><ellipse cx="8.750" cy="5.750" rx="6.300" ry="3.900" fill="#2f4050"/><circle cx="8.750" cy="5.750" r="2.900" fill="#a7b1c2"/><path d="M8.200 4.500l.9-.5v3.500M7.900 7.500h2" stroke="#2f4050" stroke-width=".9" fill="none"/></svg>
<div class="abs" style="left:58.0px;top:656.9px;font-size:15px;font-weight:bold;color:#a7b1c2;line-height:20px;white-space:nowrap">财务</div>
<svg class="abs" style="left:244px;top:661.4px" width="7" height="11" viewBox="0 0 7 11" fill="none" stroke="#a7b1c2" stroke-width="1.500"><path d="M6 .8L1.300 5.500 6 10.200"/></svg>
<svg class="abs" style="left:30px;top:716.9px" width="18" height="13.500" viewBox="0 0 18 13.500" fill="none" stroke="#a7b1c2"><path d="M.8 0v12.700H18" stroke-width="1.500"/><path d="M3.300 9.500l3.700-3.800 2.500 2.400 4.500-4.600" stroke-width="2.100"/><path d="M11.500 1.500h4.800v4.800z" fill="#a7b1c2" stroke="none"/></svg>
<div class="abs" style="left:59.0px;top:713.6px;font-size:15px;font-weight:bold;color:#a7b1c2;line-height:20px;white-space:nowrap">数据</div>
<svg class="abs" style="left:244px;top:718.1px" width="7" height="11" viewBox="0 0 7 11" fill="none" stroke="#a7b1c2" stroke-width="1.500"><path d="M6 .8L1.300 5.500 6 10.200"/></svg>
<svg class="abs" style="left:30px;top:772.7px" width="19.500" height="16" viewBox="0 0 20 16" preserveAspectRatio="none" fill="#a7b1c2"><path d="M10 0l4.300 1.800v4.500L10 8.200 5.700 6.300V1.800zM5 7.300l4.500 1.900v4.700L5 16 .5 13.900V9.200zM15 7.300l4.500 1.900v4.700L15 16l-4.500-2.100V9.200z"/><path d="M10 3.800l3-1.300M10 3.800L7 2.500M10 3.800V7M5 11.500l3.200-1.400M5 11.500L1.800 10M5 11.500V15M15 11.500l3.200-1.400M15 11.500L11.800 10M15 11.500V15" stroke="#2f4050" stroke-width=".45" fill="none"/></svg>
<div class="abs" style="left:61.8px;top:770.7px;font-size:15px;font-weight:bold;color:#a7b1c2;line-height:20px;white-space:nowrap">小程序</div>
<svg class="abs" style="left:244px;top:775.2px" width="7" height="11" viewBox="0 0 7 11" fill="none" stroke="#a7b1c2" stroke-width="1.500"><path d="M6 .8L1.300 5.500 6 10.200"/></svg>
<svg class="abs" style="left:30px;top:830.2px" width="19" height="15" viewBox="0 0 19 15" fill="#a7b1c2"><path d="M7 0C3.100 0 0 2.500 0 5.600c0 1.800 1 3.300 2.600 4.400L2 12l2.400-1.200c.8.200 1.500.4 2.400.4C6.500 7.500 9 5 12.800 4.800 12.200 2 9.800 0 7 0z"/><path d="M19 9.800c0-2.600-2.600-4.600-5.600-4.600s-5.600 2-5.600 4.600 2.600 4.600 5.600 4.600c.7 0 1.300-.1 1.900-.3l1.900 1-.5-1.700C18.100 12.500 19 11.200 19 9.800z"/><circle cx="4.600" cy="3.800" r=".8" fill="#2f4050"/><circle cx="9" cy="3.800" r=".8" fill="#2f4050"/></svg>
<div class="abs" style="left:59.0px;top:827.7px;font-size:15px;font-weight:bold;color:#a7b1c2;line-height:20px;white-space:nowrap">公众号</div>
<svg class="abs" style="left:244px;top:832.2px" width="7" height="11" viewBox="0 0 7 11" fill="none" stroke="#a7b1c2" stroke-width="1.500"><path d="M6 .8L1.300 5.500 6 10.200"/></svg>
<svg class="abs" style="left:30px;top:888.0px" width="18" height="14" viewBox="0 0 18 14" fill="#a7b1c2"><path d="M3 .8C5 .2 7 .4 8.500 1.500V12C7 11 5 10.800 2.500 11.500L1 13.500h7.500c.3.300.7.300 1 0H17l-1.500-2c-2.500-.7-4.500-.5-6 .5V1.500C11 .4 13 .2 15 .8l2 11.500h-1L14.500 2c-1.500-.3-3 0-4 .8v8c1.200-.6 2.600-.8 4.200-.5L13.500 3M3.500 2L2 12.300H1z"/><path d="M3.300 1.500C5 1 7 1.200 8.300 2.200v9.300c-1.500-.8-3.500-1-5.800-.4z"/><path d="M14.700 1.500C13 1 11 1.200 9.700 2.200v9.300c1.500-.8 3.500-1 5.800-.4z"/></svg>
<div class="abs" style="left:59.0px;top:885.0px;font-size:15px;font-weight:bold;color:#a7b1c2;line-height:20px;white-space:nowrap">内容</div>
<svg class="abs" style="left:244px;top:889.5px" width="7" height="11" viewBox="0 0 7 11" fill="none" stroke="#a7b1c2" stroke-width="1.500"><path d="M6 .8L1.300 5.500 6 10.200"/></svg>
</div></div>
<!-- content -->
<div class="abs" style="left:294px;top:72px;width:1550px;height:143px;background:#fff"></div>
<div class="abs" style="left:294px;top:216px;width:1550px;height:660px;background:#fff"></div>
<div class="abs" style="left:294px;top:214px;width:1550px;height:2px;background:#f8f8f8"></div>
<div class="abs" style="left:294px;top:121px;width:1550px;height:1px;background:#e6e6e6"></div>
<div class="abs" style="left:294px;top:120px;width:156px;height:3px;background:#0092dc"></div>
<div class="ltab" style="left:313px;top:72px">出售中商品(42)</div>
<div class="ltab" style="left:469px;top:72px">仓库中商品(16)</div>
<div class="ltab" style="left:625px;top:72px">已经售罄商品(0)</div>
<div class="ltab" style="left:789px;top:72px">警戒库存(3)</div>
<div class="ltab" style="left:917px;top:72px">商品回收站(9)</div>
<div class="lbox" style="left:306px;top:147px;width:361px;height:42px"><div class="abs" style="left:0;top:0;width:137px;height:40px;border-right:1px solid #e6e6e6;text-align:center;line-height:43px;font-size:16.25px;color:#555">所有分类</div><div class="abs" style="left:152px;top:0;line-height:42px;font-size:15px;color:#111">全部</div><svg class="abs" style="left:333px;top:16px" width="15" height="8" viewBox="0 0 15 8"><path d="M0 0h15L7.500 8z" fill="#c2c2c2"/></svg></div>
<div class="lbox" style="left:684.5px;top:147px;width:361px;height:42px"><div class="abs" style="left:0;top:0;width:137px;height:40px;border-right:1px solid #e6e6e6;text-align:center;line-height:43px;font-size:16.25px;color:#555">商品名称</div><div class="abs" style="left:152px;top:0;line-height:42.500px;font-size:15px;color:#757575;white-space:nowrap">请输入商品名称,关键字,编号</div></div>
<div class="btnp" style="left:1063px;top:150px;width:74px;height:37px;line-height:37px;font-size:15px"><svg class="abs" style="left:13px;top:12px" width="14" height="14" viewBox="0 0 14 14" fill="none" stroke="#fff" stroke-width="1.300"><circle cx="5.600" cy="5.600" r="4.800"/><path d="M9 9l4 4" stroke-width="2"/></svg><span class="abs" style="left:31px;top:0">搜索</span></div>
<div class="abs" style="left:1154px;top:150px;width:74px;height:37px;line-height:35px;font-size:15px;border:1px solid #e2e2e2;border-radius:3px;background:#fff;color:#333"><svg class="abs" style="left:12px;top:11px" width="14" height="14" viewBox="0 0 14 14" fill="none" stroke="#444" stroke-width="1.200"><path d="M.8.800h9.700l2.700 2.700v9.700H.8z"/><path d="M3.500.800v4h6v-4M3 13V8.500h8V13"/></svg><span class="abs" style="left:29px;top:0">导出</span></div>
<div class="abs" style="left:306px;top:246px;width:1526px;height:70px;background:#d9edf7;border:1px solid #bce8f1;border-radius:5px;color:#31708f;font-size:16.25px;line-height:68px;padding-left:19px;white-space:nowrap">列表[虚拟销量],[库存],[排序]可进行快速修改,双击或者单击进入编辑模式,失去焦点可进行自动保存</div>
<div class="btnp" style="left:306px;top:341px;width:85px;height:37px;line-height:37px;font-size:15px">添加商品</div>
<div class="btnp" style="left:404px;top:341px;width:223px;height:37px;line-height:37px;font-size:15px">复制淘宝、天猫、1688、京东</div>
<div class="abs" style="left:306px;top:403px;width:1525px;height:48px;background:#f2f2f2"></div>
<div class="abs" style="left:306px;top:403px;width:1526px;height:1px;background:#e6e6e6"></div>
<div class="abs" style="left:306px;top:451px;width:1526px;height:1px;background:#e6e6e6"></div>
<div class="abs" style="left:306px;top:558px;width:1526px;height:1px;background:#e6e6e6"></div>
<div class="abs" style="left:306px;top:665px;width:1526px;height:1px;background:#e6e6e6"></div>
<div class="abs" style="left:306px;top:772px;width:1526px;height:1px;background:#e6e6e6"></div>
<div class="abs" style="left:306px;top:879px;width:1526px;height:1px;background:#e6e6e6"></div>
<div class="abs" style="left:306px;top:403px;width:1px;height:478px;background:#e6e6e6"></div>
<div class="abs" style="left:398px;top:403px;width:1px;height:478px;background:#e6e6e6"></div>
<div class="abs" style="left:551px;top:403px;width:1px;height:478px;background:#e6e6e6"></div>
<div class="abs" style="left:1042px;top:403px;width:1px;height:478px;background:#e6e6e6"></div>
<div class="abs" style="left:1163px;top:403px;width:1px;height:478px;background:#e6e6e6"></div>
<div class="abs" style="left:1284px;top:403px;width:1px;height:478px;background:#e6e6e6"></div>
<div class="abs" style="left:1375px;top:403px;width:1px;height:478px;background:#e6e6e6"></div>
<div class="abs" style="left:1496px;top:403px;width:1px;height:478px;background:#e6e6e6"></div>
<div class="abs" style="left:1617px;top:403px;width:1px;height:478px;background:#e6e6e6"></div>
<div class="abs" style="left:1831px;top:403px;width:1px;height:478px;background:#e6e6e6"></div>
<div class="cell" style="left:326px;top:403px;line-height:49.500px">ID</div>
<div class="cell" style="left:417px;top:403px;line-height:49.500px">商品图片</div>
<div class="cell" style="left:570px;top:403px;line-height:49.500px">商品名称</div>
<div class="cell" style="left:1061px;top:403px;line-height:49.500px">虚拟销量</div>
<div class="cell" style="left:1182px;top:403px;line-height:49.500px">库存</div>
<div class="cell" style="left:1303px;top:403px;line-height:49.500px">排序</div>
<div class="cell" style="left:1394px;top:403px;line-height:49.500px">销量</div>
<div class="cell" style="left:1515px;top:403px;line-height:49.500px">状态</div>
<div class="cell" style="left:1617px;top:403px;width:215px;text-align:center;line-height:49.500px">操作</div>
<svg class="abs" style="left:355px;top:421px" width="13" height="15" viewBox="0 0 13 15"><path d="M6.500 0L13 6.500H0z" fill="#b2b2b2"/><path d="M0 8.500h13L6.500 15z" fill="#b2b2b2"/></svg>
<svg class="abs" style="left:1439px;top:421px" width="13" height="15" viewBox="0 0 13 15"><path d="M6.500 0L13 6.500H0z" fill="#b2b2b2"/><path d="M0 8.500h13L6.500 15z" fill="#b2b2b2"/></svg>
<div class="cell" style="left:326px;top:491.7px;line-height:24px">75</div>
<div class="abs" style="left:405px;top:487px;width:150px;height:25px;border:1px solid #b4b4b4;background:#fff;box-shadow:inset 1px 1px 0 #d8d8d8"><svg class="abs" style="left:1px;top:1.500px" width="20" height="20" viewBox="0 0 20 20"><path d="M1.500.500h11.500l5.500 5.500v13.500h-17z" fill="#fff" stroke="#9a9a9a" stroke-width="1"/><path d="M13 .5V6h5.500" fill="#eee" stroke="#9a9a9a" stroke-width="1"/><path d="M2 3h10.500v8.500L2 15z" fill="#b8d4f7"/><ellipse cx="7" cy="5.800" rx="2.600" ry="1.500" fill="#fff"/><path d="M2 19v-3.500c2.500-3.500 6-4.500 9.500-2.500L18 9.500V19z" fill="#4ea82e"/><path d="M9 19l9-8v3l-5.500 5z" fill="#fff"/></svg></div>
<div class="abs" style="left:570px;top:465.5px;width:470px;font-size:17.5px;font-weight:bold;color:#5e5f61;line-height:18.5px;white-space:nowrap">奥克斯空调立式大2匹家用定频圆筒柜机空调冷暖二级能效<br>wifi智能</div>
<div class="abs" style="left:570px;top:503px;font-size:16.25px;color:#676a6c;line-height:24px;white-space:nowrap">价格:<span style="color:#f00">2899.00</span></div>
<div class="abs" style="left:570px;top:528px;font-size:16.25px;color:#676a6c;line-height:24px;white-space:nowrap">分类:空调</div>
<div class="cell" style="left:1061px;top:491.7px;line-height:24px">100</div>
<div class="cell" style="left:1182px;top:491.7px;line-height:24px">50</div>
<div class="cell" style="left:1303px;top:491.7px;line-height:24px">0</div>
<div class="cell" style="left:1394px;top:491.7px;line-height:24px">0</div>
<div class="abs" style="left:1515px;top:491px;width:78px;height:30px;border-radius:15px;background:#0092dc;color:#fff;font-size:15px;line-height:30px"><span class="abs" style="left:14px;top:-0.500px">上架</span><span class="abs" style="left:50px;top:5px;width:20px;height:20px;border-radius:10px;background:#fff"></span></div>
<div class="btnp" style="left:1671px;top:492px;width:42px;height:28px;line-height:30px;font-size:15px;border-radius:2px">编辑</div>
<div class="btnp" style="left:1718px;top:492px;width:59px;height:28px;line-height:30px;font-size:15px;border-radius:2px;text-align:left;padding-left:6px">操作<svg class="abs" style="left:43px;top:12px" width="9" height="5" viewBox="0 0 9 5"><path d="M0 0h9L4.500 5z" fill="#fff"/></svg></div>
<div class="cell" style="left:326px;top:598.7px;line-height:24px">74</div>
<div class="abs" style="left:405px;top:594px;width:150px;height:25px;border:1px solid #b4b4b4;background:#fff;box-shadow:inset 1px 1px 0 #d8d8d8"><svg class="abs" style="left:1px;top:1.500px" width="20" height="20" viewBox="0 0 20 20"><path d="M1.500.500h11.500l5.500 5.500v13.500h-17z" fill="#fff" stroke="#9a9a9a" stroke-width="1"/><path d="M13 .5V6h5.500" fill="#eee" stroke="#9a9a9a" stroke-width="1"/><path d="M2 3h10.500v8.500L2 15z" fill="#b8d4f7"/><ellipse cx="7" cy="5.800" rx="2.600" ry="1.500" fill="#fff"/><path d="M2 19v-3.500c2.500-3.500 6-4.500 9.500-2.500L18 9.500V19z" fill="#4ea82e"/><path d="M9 19l9-8v3l-5.500 5z" fill="#fff"/></svg></div>
<div class="abs" style="left:570px;top:572.5px;width:470px;font-size:17.5px;font-weight:bold;color:#5e5f61;line-height:18.5px;white-space:nowrap">小黄鸭5.6KG迷你洗衣机全自动家用波轮宝宝小型加热洗<br>烘干一体机</div>
<div class="abs" style="left:570px;top:610px;font-size:16.25px;color:#676a6c;line-height:24px;white-space:nowrap">价格:<span style="color:#f00">1399.00</span></div>
<div class="abs" style="left:570px;top:635px;font-size:16.25px;color:#676a6c;line-height:24px;white-space:nowrap">分类:洗衣机</div>
<div class="cell" style="left:1061px;top:598.7px;line-height:24px">169</div>
<div class="cell" style="left:1182px;top:598.7px;line-height:24px">70</div>
<div class="cell" style="left:1303px;top:598.7px;line-height:24px">0</div>
<div class="cell" style="left:1394px;top:598.7px;line-height:24px">0</div>
<div class="abs" style="left:1515px;top:598px;width:78px;height:30px;border-radius:15px;background:#0092dc;color:#fff;font-size:15px;line-height:30px"><span class="abs" style="left:14px;top:-0.500px">上架</span><span class="abs" style="left:50px;top:5px;width:20px;height:20px;border-radius:10px;background:#fff"></span></div>
<div class="btnp" style="left:1671px;top:599px;width:42px;height:28px;line-height:30px;font-size:15px;border-radius:2px">编辑</div>
<div class="btnp" style="left:1718px;top:599px;width:59px;height:28px;line-height:30px;font-size:15px;border-radius:2px;text-align:left;padding-left:6px">操作<svg class="abs" style="left:43px;top:12px" width="9" height="5" viewBox="0 0 9 5"><path d="M0 0h9L4.500 5z" fill="#fff"/></svg></div>
<div class="cell" style="left:326px;top:705.7px;line-height:24px">73</div>
<div class="abs" style="left:405px;top:701px;width:150px;height:25px;border:1px solid #b4b4b4;background:#fff;box-shadow:inset 1px 1px 0 #d8d8d8"><svg class="abs" style="left:1px;top:1.500px" width="20" height="20" viewBox="0 0 20 20"><path d="M1.500.500h11.500l5.500 5.500v13.500h-17z" fill="#fff" stroke="#9a9a9a" stroke-width="1"/><path d="M13 .5V6h5.500" fill="#eee" stroke="#9a9a9a" stroke-width="1"/><path d="M2 3h10.500v8.500L2 15z" fill="#b8d4f7"/><ellipse cx="7" cy="5.800" rx="2.600" ry="1.500" fill="#fff"/><path d="M2 19v-3.500c2.500-3.500 6-4.500 9.500-2.500L18 9.500V19z" fill="#4ea82e"/><path d="M9 19l9-8v3l-5.500 5z" fill="#fff"/></svg></div>
<div class="abs" style="left:570px;top:679.5px;width:470px;font-size:17.5px;font-weight:bold;color:#5e5f61;line-height:18.5px;white-space:nowrap">尔给polo衫短袖日系运动休闲套装女2020年夏宽松韩版学<br>生两件套</div>
<div class="abs" style="left:570px;top:717px;font-size:16.25px;color:#676a6c;line-height:24px;white-space:nowrap">价格:<span style="color:#f00">399.00</span></div>
<div class="abs" style="left:570px;top:742px;font-size:16.25px;color:#676a6c;line-height:24px;white-space:nowrap">分类:时尚运动</div>
<div class="cell" style="left:1061px;top:705.7px;line-height:24px">56</div>
<div class="cell" style="left:1182px;top:705.7px;line-height:24px">104</div>
<div class="cell" style="left:1303px;top:705.7px;line-height:24px">0</div>
<div class="cell" style="left:1394px;top:705.7px;line-height:24px">0</div>
<div class="abs" style="left:1515px;top:705px;width:78px;height:30px;border-radius:15px;background:#0092dc;color:#fff;font-size:15px;line-height:30px"><span class="abs" style="left:14px;top:-0.500px">上架</span><span class="abs" style="left:50px;top:5px;width:20px;height:20px;border-radius:10px;background:#fff"></span></div>
<div class="btnp" style="left:1671px;top:706px;width:42px;height:28px;line-height:30px;font-size:15px;border-radius:2px">编辑</div>
<div class="btnp" style="left:1718px;top:706px;width:59px;height:28px;line-height:30px;font-size:15px;border-radius:2px;text-align:left;padding-left:6px">操作<svg class="abs" style="left:43px;top:12px" width="9" height="5" viewBox="0 0 9 5"><path d="M0 0h9L4.500 5z" fill="#fff"/></svg></div>
<div class="cell" style="left:326px;top:812.7px;line-height:24px">69</div>
<div class="abs" style="left:405px;top:808px;width:150px;height:25px;border:1px solid #b4b4b4;background:#fff;box-shadow:inset 1px 1px 0 #d8d8d8"><svg class="abs" style="left:1px;top:1.500px" width="20" height="20" viewBox="0 0 20 20"><path d="M1.500.500h11.500l5.500 5.500v13.500h-17z" fill="#fff" stroke="#9a9a9a" stroke-width="1"/><path d="M13 .5V6h5.500" fill="#eee" stroke="#9a9a9a" stroke-width="1"/><path d="M2 3h10.500v8.500L2 15z" fill="#b8d4f7"/><ellipse cx="7" cy="5.800" rx="2.600" ry="1.500" fill="#fff"/><path d="M2 19v-3.500c2.500-3.500 6-4.500 9.500-2.500L18 9.500V19z" fill="#4ea82e"/><path d="M9 19l9-8v3l-5.500 5z" fill="#fff"/></svg></div>
<div class="abs" style="left:570px;top:786.5px;width:470px;font-size:17.5px;font-weight:bold;color:#5e5f61;line-height:18.5px;white-space:nowrap">【官方正品】CHANEL 香奈儿邂逅系列香水 粉色柔情 持<br>久淡香</div>
<div class="abs" style="left:570px;top:824px;font-size:16.25px;color:#676a6c;line-height:24px;white-space:nowrap">价格:<span style="color:#f00">1200.00</span></div>
<div class="abs" style="left:570px;top:849px;font-size:16.25px;color:#676a6c;line-height:24px;white-space:nowrap">分类:香水彩妆</div>
<div class="cell" style="left:1061px;top:812.7px;line-height:24px">424</div>
<div class="cell" style="left:1182px;top:812.7px;line-height:24px">732</div>
<div class="cell" style="left:1303px;top:812.7px;line-height:24px">0</div>
<div class="cell" style="left:1394px;top:812.7px;line-height:24px">0</div>
<div class="abs" style="left:1515px;top:812px;width:78px;height:30px;border-radius:15px;background:#0092dc;color:#fff;font-size:15px;line-height:30px"><span class="abs" style="left:14px;top:-0.500px">上架</span><span class="abs" style="left:50px;top:5px;width:20px;height:20px;border-radius:10px;background:#fff"></span></div>
<div class="btnp" style="left:1671px;top:813px;width:42px;height:28px;line-height:30px;font-size:15px;border-radius:2px">编辑</div>
<div class="btnp" style="left:1718px;top:813px;width:59px;height:28px;line-height:30px;font-size:15px;border-radius:2px;text-align:left;padding-left:6px">操作<svg class="abs" style="left:43px;top:12px" width="9" height="5" viewBox="0 0 9 5"><path d="M0 0h9L4.500 5z" fill="#fff"/></svg></div>
<div class="abs" style="left:1844px;top:52px;width:25px;height:818px;background:#f3f3f4"></div>
<div class="abs" style="left:1863px;top:60px;width:6px;height:258px;background:#8c8c8c"></div>
<div class="abs" style="left:275px;top:869px;width:1594px;height:43px;background:#fff;border-top:1px solid #e7eaec;font-size:15px;color:#555;line-height:45px;text-align:right;padding-right:25px">© 2017-2020 <span style="color:#4a90e2">CRMEB</span></div>
<!-- top tab bar -->
<div id="topbar">
<div class="abs" style="left:0;top:0;width:50px;height:50px;background:#fff;border-right:1px solid #ececec"><svg class="abs" style="left:18px;top:19px" width="13" height="11" viewBox="0 0 13 11"><path d="M0 0h13v2.200H0zM0 4.400h13v2.200H0zM0 8.800h13V11H0z" fill="#999"/></svg></div>
<div class="ttab" style="left:50px;width:69px;padding-left:19px;">首页</div>
<div class="ttab" style="left:119px;width:115px;padding-left:19px;background:#2f4050;color:#a7b1c2;border-right:none;height:51px;">商品管理<svg style="display:inline-block;vertical-align:-1.500px;margin-left:4px" width="14" height="14" viewBox="0 0 14 14"><circle cx="7" cy="7" r="6.800" fill="#d6d6d6"/><path d="M4.500 4.500l5 5M9.500 4.500l-5 5" stroke="#2f4050" stroke-width="1.900"/></svg></div>
<div class="ttab" style="left:234px;width:115.5px;padding-left:19px;">会员管理<svg style="display:inline-block;vertical-align:-1.500px;margin-left:4px" width="14" height="14" viewBox="0 0 14 14"><circle cx="7" cy="7" r="6.800" fill="#cfcfcf"/><path d="M4.500 4.500l5 5M9.500 4.500l-5 5" stroke="#fafafa" stroke-width="1.900"/></svg></div>
<div class="ttab" style="left:349.5px;width:161.0px;padding-left:19px;">小程序订阅消息<svg style="display:inline-block;vertical-align:-1.500px;margin-left:4px" width="14" height="14" viewBox="0 0 14 14"><circle cx="7" cy="7" r="6.800" fill="#cfcfcf"/><path d="M4.500 4.500l5 5M9.500 4.500l-5 5" stroke="#fafafa" stroke-width="1.900"/></svg></div>
<div class="ttab" style="left:510.5px;width:116.5px;padding-left:19px;">微信菜单<svg style="display:inline-block;vertical-align:-1.500px;margin-left:4px" width="14" height="14" viewBox="0 0 14 14"><circle cx="7" cy="7" r="6.800" fill="#cfcfcf"/><path d="M4.500 4.500l5 5M9.500 4.500l-5 5" stroke="#fafafa" stroke-width="1.900"/></svg></div>
<div class="tbtn" style="left:1229px;width:50px"><svg class="abs" style="left:18px;top:18px" width="15" height="14" viewBox="0 0 15 14" fill="#999"><path d="M7.500 0v14L0 7zM15 0v14L7.500 7z"/></svg></div>
<div class="tbtn" style="left:1279px;width:50px"><svg class="abs" style="left:17px;top:18px" width="15" height="14" viewBox="0 0 15 14" fill="#999"><path d="M0 0l7.500 7L0 14zM7.500 0L15 7l-7.500 7z"/></svg></div>
<div class="tbtn" style="left:1329px;width:65px"><span class="abs" style="left:10px;top:0;font-size:15px;color:#999;line-height:50px;white-space:nowrap">关闭<svg style="display:inline-block;vertical-align:2px;margin-left:3px" width="9" height="5" viewBox="0 0 9 5"><path d="M0 0h9L4.500 5z" fill="#999"/></svg></span></div>
<div class="tbtn" style="left:1394px;width:51px"><svg class="abs" style="left:17px;top:18px" width="15.500" height="13.500" viewBox="0 0 16 14" preserveAspectRatio="none" fill="#999"><path d="M6.500 0v3.500c6 0 9.500 3 9.500 10.500-1.500-4-4-5.500-9.500-5.500V12L0 6z"/></svg></div>
<div class="tbtn" style="left:1445px;width:49px"><svg class="abs" style="left:18px;top:18px" width="14" height="14" viewBox="0 0 14 14" fill="none" stroke="#999" stroke-width="2.200"><path d="M12.500 5.500A5.800 5.800 0 0 0 2 4.500"/><path d="M1.500 8.500A5.800 5.800 0 0 0 12 9.500"/><path d="M14 1v5H9zM0 13V8h5z" fill="#999" stroke="none"/></svg></div>
<div class="tbtn" style="left:1494px;width:51px"><svg class="abs" style="left:18.500px;top:18px" width="14" height="14.500" viewBox="0 0 16 16" preserveAspectRatio="none" fill="#999"><path d="M8 0c.6 0 1 .4 1 1v.6c2.500.5 4 2.600 4 5.400 0 3 1 4.500 2.500 5.500v1H.5v-1C2 11.500 3 10 3 7c0-2.800 1.500-4.900 4-5.400V1c0-.6.400-1 1-1zM6 14.300h4c0 1-.9 1.700-2 1.700s-2-.7-2-1.700z"/></svg><span class="abs" style="left:24.300px;top:.5px;width:14.500px;height:20px;border-radius:7px;background:#ed5565;color:#fff;font-size:12.5px;font-weight:bold;line-height:20px;text-align:center">3</span></div>
<div class="tbtn" style="left:1545px;width:49px"><svg class="abs" style="left:17px;top:18px" width="16" height="12.500" viewBox="0 0 16 13" preserveAspectRatio="none" fill="#999"><path d="M0 0h16v3.500H0zM0 4.700h16v3.500H0zM0 9.500h16V13H0z"/><path d="M11 1.200h3.500v1H11zM8 5.900h6.500v1H8zM12 10.700h2.500v1H12z" fill="#fff"/></svg></div>
</div>
<!-- dropdown -->
<div class="abs" style="left:1670px;top:53px;width:199px;height:260px;background:#fff;box-shadow:0 0 4px rgba(86,96,117,.45);font-size:15px;color:#444"></div>
<svg class="abs" style="left:1712.2px;top:81.8px" width="12.300" height="15" viewBox="0 0 12.300 15"><path d="M.6.600h11.100v13.800H.6z" fill="none" stroke="#555" stroke-width="1.200"/><path d="M2.6 2.4h1.100v1.100h-1.100zM2.6 4.5h1.100v1.100h-1.100zM2.6 6.6h1.100v1.100h-1.100zM2.6 8.7h1.100v1.100h-1.100zM2.6 10.8h1.100v1.100h-1.100zM4.8 2.4h1.100v1.100h-1.100zM4.8 4.5h1.100v1.100h-1.100zM4.8 6.6h1.100v1.100h-1.100zM4.8 8.7h1.100v1.100h-1.100zM4.8 10.8h1.100v1.100h-1.100zM7.0 2.4h1.100v1.100h-1.100zM7.0 4.5h1.100v1.100h-1.100zM7.0 6.6h1.100v1.100h-1.100zM7.0 8.7h1.100v1.100h-1.100zM7.0 10.8h1.100v1.100h-1.100zM9.2 2.4h1.100v1.100h-1.100zM9.2 4.5h1.100v1.100h-1.100zM9.2 6.6h1.100v1.100h-1.100zM9.2 8.7h1.100v1.100h-1.100zM9.2 10.8h1.100v1.100h-1.100z" fill="#666"/><path d="M4.600 11.800h3.100v2.600H4.600z" fill="#444"/></svg>
<div class="abs" style="left:1728.5px;top:80.1px;font-size:15px;font-weight:400;color:#4a4a4a;line-height:20px;white-space:nowrap">待发货</div>
<div class="abs" style="left:1807.5px;top:80.1px;font-size:14px;color:#8a8a8a;line-height:20px;white-space:nowrap;letter-spacing:-0.5px">0个</div>
<svg class="abs" style="left:1712.2px;top:143.9px" width="12.500" height="15" viewBox="0 0 12.500 15"><path d="M.5 14.500c2.500-.3 4.300-1.800 5.200-4.500.5-1.600.6-3.300.5-5" fill="none" stroke="#444" stroke-width="1.100"/><path d="M6.200 0c1.300 1.300 1.500 3 .6 4.800-1.500-1.100-1.800-3-.6-4.800zM2 2.800c1.800.1 3 1.100 3.600 2.900-1.900.3-3.200-.9-3.600-2.900zM11 3c-.3 1.900-1.500 3-3.500 3.200.1-1.800 1.500-3 3.500-3.200zM.3 8c1.800-.8 3.500-.3 4.900 1.200C3.500 10.300 1.600 9.800.3 8zM12.300 8.200c-1 1.700-2.700 2.300-4.800 1.700.9-1.700 2.700-2.400 4.800-1.700z" fill="#444"/></svg>
<div class="abs" style="left:1728.5px;top:142.2px;font-size:15px;font-weight:400;color:#4a4a4a;line-height:20px;white-space:nowrap">库存预警</div>
<div class="abs" style="left:1807.5px;top:142.2px;font-size:14px;color:#8a8a8a;line-height:20px;white-space:nowrap;letter-spacing:-0.5px">3个</div>
<svg class="abs" style="left:1712.2px;top:206px;margin-top:2px" width="15" height="11.500" viewBox="0 0 16 13" preserveAspectRatio="none" fill="none" stroke="#444" stroke-width="1.400"><ellipse cx="6.300" cy="5" rx="5.600" ry="4.200"/><path d="M3 8.500L2.300 11l3-1.800"/><path d="M12.500 5c1.800.7 2.900 1.900 2.900 3.300 0 1-.6 1.900-1.500 2.500l.5 1.700-2.200-1.100c-1.800.3-3.500 0-4.700-.9"/></svg>
<div class="abs" style="left:1731.5px;top:204.3px;font-size:15px;font-weight:400;color:#4a4a4a;line-height:20px;white-space:nowrap">新评论</div>
<div class="abs" style="left:1807.5px;top:204.3px;font-size:14px;color:#8a8a8a;line-height:20px;white-space:nowrap;letter-spacing:-0.5px">0个</div>
<span class="abs" style="left:1712.2px;top:268.7px;font-size:16.500px;font-weight:bold;color:#444;line-height:15px;font-family:Liberation Sans,sans-serif">¥</span>
<div class="abs" style="left:1725.5px;top:267px;font-size:15px;font-weight:400;color:#4a4a4a;line-height:20px;white-space:nowrap">申请提现</div>
<div class="abs" style="left:1807.5px;top:267px;font-size:14px;color:#8a8a8a;line-height:20px;white-space:nowrap;letter-spacing:-0.5px">0个</div>
<div class="abs" style="left:1683px;top:120px;width:175px;height:1px;background:#e7eaec"></div>
<div class="abs" style="left:1683px;top:181.5px;width:175px;height:1px;background:#e7eaec"></div>
<div class="abs" style="left:1683px;top:244px;width:175px;height:1px;background:#e7eaec"></div>
</div>
</body>
</html>
